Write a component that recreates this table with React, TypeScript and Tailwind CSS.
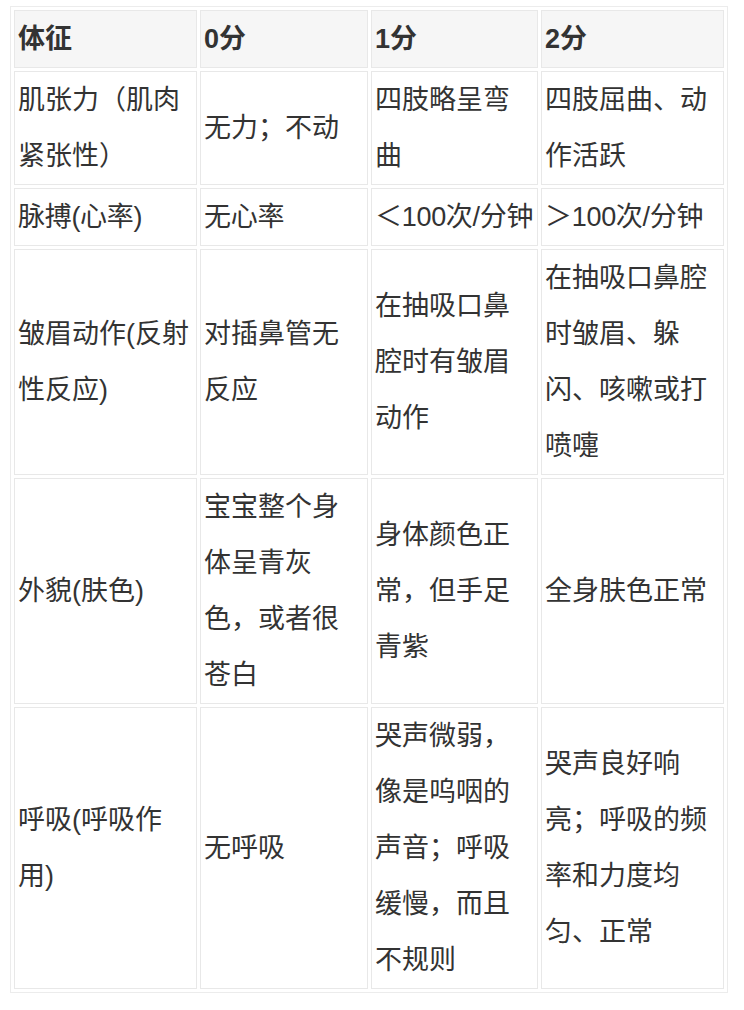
import React from "react";

const rows: string[][] = [
  ["肌张力（肌肉紧张性）", "无力；不动", "四肢略呈弯曲", "四肢屈曲、动作活跃"],
  ["脉搏(心率)", "无心率", "＜100次/分钟", "＞100次/分钟"],
  ["皱眉动作(反射性反应)", "对插鼻管无反应", "在抽吸口鼻腔时有皱眉动作", "在抽吸口鼻腔时皱眉、躲闪、咳嗽或打喷嚏"],
  ["外貌(肤色)", "宝宝整个身体呈青灰色，或者很苍白", "身体颜色正常，但手足青紫", "全身肤色正常"],
  ["呼吸(呼吸作用)", "无呼吸", "哭声微弱，像是呜咽的声音；呼吸缓慢，而且不规则", "哭声良好响亮；呼吸的频率和力度均匀、正常"],
];

const headers = ["体征", "0分", "1分", "2分"];
const widths = ["w-[183px]", "w-[168px]", "w-[167px]", "w-[183px]"];

export default function App() {
  return (
    <div
      className="bg-white pt-[6px] pl-[10px] min-h-[1010px] text-[#333333]"
      style={{ fontFamily: '"Liberation Sans", "Noto Sans CJK SC", sans-serif' }}
    >
      <table className="table-fixed border-separate border-spacing-[3px] border border-[#ececec] text-[27px] leading-[56px]">
        <thead>
          <tr>
            {headers.map((h, i) => (
              <th
                key={h}
                className={`${widths[i]} bg-[#f6f6f6] border border-[#e8e8e8] px-[3px] py-0 text-left font-bold align-middle`}
              >
                {h}
              </th>
            ))}
          </tr>
        </thead>
        <tbody>
          {rows.map((r, ri) => (
            <tr key={ri}>
              {r.map((c, ci) => (
                <td
                  key={ci}
                  className={
                    ri === 1
                      ? "border border-[#e8e8e8] px-[3px] py-0 text-left align-middle font-normal whitespace-nowrap overflow-visible tracking-[-0.3px]"
                      : "border border-[#e8e8e8] px-[3px] py-0 text-left align-middle font-normal"
                  }
                >
                  {c}
                </td>
              ))}
            </tr>
          ))}
        </tbody>
      </table>
    </div>
  );
}
